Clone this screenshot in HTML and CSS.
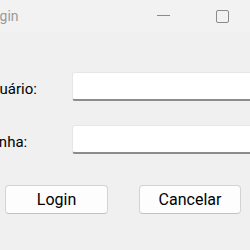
FILE: index.html
```html
<!DOCTYPE html>
<html>
<head>
<meta charset="utf-8">
<link rel="stylesheet" href="styles.css">
</head>
<body>
<div class="titlebar">
  <span class="title">Login</span>
  <span class="cap-min"></span>
  <span class="cap-max"></span>
</div>
<div class="form">
  <label class="label">Usuário:</label>
  <div class="input"></div>
  <label class="label">Senha:</label>
  <div class="input"></div>
</div>
<div class="buttons">
  <button class="btn btn-login">Login</button>
  <button class="btn btn-cancel">Cancelar</button>
</div>
</body>
</html>
```
FILE: styles.css
```css
html, body {
  margin: 0;
  padding: 0;
}
body {
  width: 250px;
  height: 250px;
  overflow: hidden;
  background: #f0f0f0;
  font-family: Roboto, "Liberation Sans", sans-serif;
  color: #000;
}
.titlebar {
  height: 32px;
  display: flex;
  align-items: center;
  background: #f2f2f2;
}
.title {
  width: 173px;
  flex-shrink: 0;
  margin-left: -16px;
  font-size: 14px;
  color: #9a9a9a;
  padding-bottom: 1px;
}
.cap-min {
  width: 13px;
  height: 1px;
  border-top: 1px solid #8a8a8a;
  flex-shrink: 0;
}
.cap-max {
  width: 11px;
  height: 11px;
  border: 1.5px solid #8a8a8a;
  border-radius: 2px;
  margin-left: 46px;
  flex-shrink: 0;
}
.form {
  margin-left: -18px;
  padding-top: 40px;
  display: grid;
  grid-template-columns: 90px 200px;
  row-gap: 24px;
  align-items: center;
}
.label {
  font-size: 15px;
  padding-top: 4px;
}
.input {
  height: 29px;
  box-sizing: border-box;
  background: #fff;
  border: 1px solid #e6e6e6;
  border-bottom: 2px solid #8c8c8c;
  border-radius: 3px 0 0 3px;
}
.buttons {
  display: flex;
  gap: 31px;
  padding-left: 5px;
  margin-top: 31px;
}
.btn {
  height: 29px;
  box-sizing: border-box;
  background: #fdfdfd;
  border: 1px solid #d3d3d3;
  border-bottom-color: #c2c2c2;
  border-radius: 4px;
  font-family: Roboto, "Liberation Sans", sans-serif;
  font-size: 16px;
  color: #000;
  padding: 0;
}
.btn-login {
  width: 103px;
}
.btn-cancel {
  width: 102px;
}
```
